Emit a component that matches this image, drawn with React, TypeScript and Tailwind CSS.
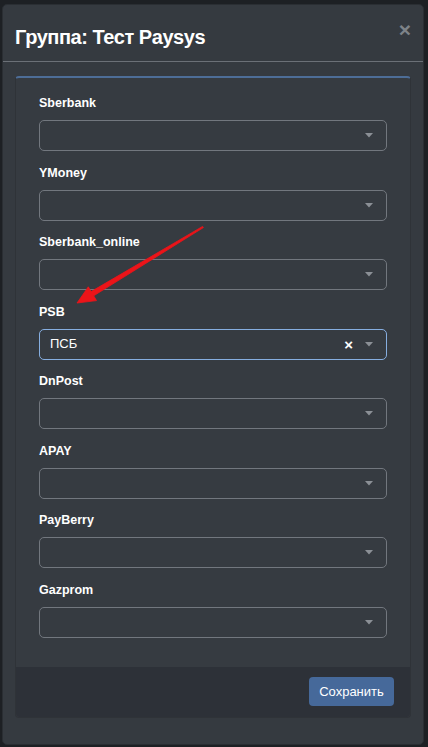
import React from "react";

const fields: { label: string; value?: string }[] = [
  { label: "Sberbank" },
  { label: "YMoney" },
  { label: "Sberbank_online" },
  { label: "PSB", value: "ПСБ" },
  { label: "DnPost" },
  { label: "APAY" },
  { label: "PayBerry" },
  { label: "Gazprom" },
];

function Caret() {
  return (
    <svg width="8" height="5" viewBox="0 0 8 5" className="shrink-0">
      <path d="M0 0 L8 0 L4 4.5 Z" fill="#8b9096" />
    </svg>
  );
}

export default function App() {
  return (
    <div
      className="relative min-h-[747px] w-[428px] overflow-hidden bg-[#1d2024] pt-[4px] pl-[2px]"
      style={{ fontFamily: "'Liberation Sans', Arial, sans-serif" }}
    >
      <div className="w-[422px] h-[741px] rounded-[5px] bg-[#353a40] border border-[#2a2e33]">
        <div className="relative h-[57px] border-b border-[#6b7077] pl-[12px] pt-[20px]">
          <div className="text-[20px] leading-[24px] font-bold text-white tracking-[-0.45px]">
            Группа: Тест Paysys
          </div>
          <div className="absolute right-[12px] top-[13px] text-[21px] leading-[24px] font-bold text-[#7e8389]">
            ×
          </div>
        </div>
        <div className="mx-[12px] mt-[14px] border border-[#2f3338] border-t-2 border-t-[#4d6d97] rounded-[4px] bg-[#363b41]">
          <div className="px-[23px] pt-[16px] pb-[29px] flex flex-col gap-[12.5px]">
            {fields.map((f) => (
              <div key={f.label} className="flex flex-col">
                <div className="h-[18px] text-[12.5px] leading-[18px] font-bold text-white">{f.label}</div>
                <div
                  className={
                    f.value
                      ? "mt-[8px] h-[31px] rounded-[5px] border border-[#86aee0] flex items-center pl-[10px] pr-[13px]"
                      : "mt-[8px] h-[31px] rounded-[5px] border border-[#72777e] flex items-center pl-[10px] pr-[13px]"
                  }
                >
                  <span className="flex-1 text-[13px] text-white">{f.value ?? ""}</span>
                  {f.value && (
                    <span className="mr-[12px] text-[15px] leading-none font-bold text-white">×</span>
                  )}
                  <Caret />
                </div>
              </div>
            ))}
          </div>
          <div className="h-[50px] bg-[#2d3138] flex items-center justify-end pr-[16px] rounded-b-[4px]">
            <button className="h-[29px] w-[85px] rounded-[4px] bg-[#46699a] text-white text-[13px]">
              Сохранить
            </button>
          </div>
        </div>
      </div>
      <svg className="absolute left-0 top-0 pointer-events-none" width="428" height="747">
        <path
          d="M202.6 226.4 L203.4 227.6 L93.7 295.8 L96.5 300.6 L77 303 L88.3 286.8 L91.1 291.6 Z"
          fill="#ec1419"
          stroke="#ec1419"
          strokeWidth="0.8"
          strokeLinejoin="round"
        />
      </svg>
    </div>
  );
}
